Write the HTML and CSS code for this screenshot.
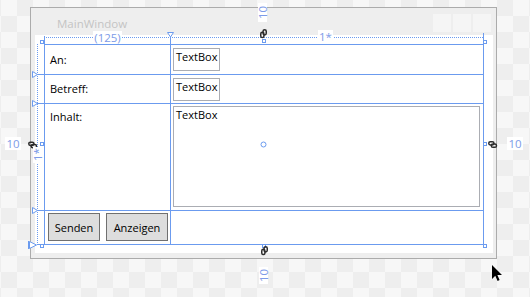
FILE: index.html
```html
<!DOCTYPE html>
<html>
<head>
<meta charset="utf-8">
<link rel="stylesheet" href="styles.css">
</head>
<body>
<div class="stage">
  <div class="window">
    <div class="titlebar">
      <span class="title">MainWindow</span>
      <div class="caps"><span></span><span></span><span></span></div>
    </div>
    <div class="client">
      <div class="grid">
        <div class="cell c1 rb"><span class="lbl l1">An:</span></div>
        <div class="cell rb"><span class="tb">TextBox</span></div>
        <div class="cell c1 rb"><span class="lbl l2">Betreff:</span></div>
        <div class="cell rb"><span class="tb">TextBox</span></div>
        <div class="cell c1 rb"><span class="lbl l3">Inhalt:</span></div>
        <div class="cell rb"><span class="tb big">TextBox</span></div>
        <div class="cell c1">
          <div class="btns">
            <div class="btn w52">Senden</div>
            <div class="btn w62">Anzeigen</div>
          </div>
        </div>
        <div class="cell"></div>
      </div>
    </div>
  </div>

  <svg class="overlay" viewBox="0 0 530 297" xmlns="http://www.w3.org/2000/svg">
    <defs>
      <g id="chain" fill="none" stroke="#2b2b2b" stroke-width="1.5">
        <rect x="0.75" y="0.75" width="5.2" height="3.2" rx="1.6"/>
        <rect x="3.3" y="3.05" width="5.2" height="3.2" rx="1.6"/>
      </g>
    </defs>
    <g stroke="#6b9bef" stroke-width="1" fill="none">
      <line x1="44" y1="37.5" x2="483" y2="37.5" stroke-dasharray="1 1"/>
      <line x1="37.5" y1="44" x2="37.5" y2="245" stroke-dasharray="1 1"/>
      <line x1="44.5" y1="36" x2="44.5" y2="44"/>
      <line x1="170.5" y1="37" x2="170.5" y2="44"/>
      <line x1="483.5" y1="33" x2="483.5" y2="44"/>
      <line x1="37" y1="74.5" x2="44" y2="74.5"/>
      <line x1="37" y1="103.5" x2="44" y2="103.5"/>
      <line x1="37" y1="210.5" x2="44" y2="210.5"/>
      <line x1="37" y1="244.5" x2="44" y2="244.5"/>
      <line x1="28.5" y1="241" x2="28.5" y2="249"/>
    </g>
    <g stroke="#6b9bef" stroke-width="1" fill="#fff">
      <polygon points="167.5,32.5 173.5,32.5 170.5,37"/>
      <polygon points="32.5,71.5 37.5,74.5 32.5,77.5"/>
      <polygon points="32.5,100.5 37.5,103.5 32.5,106.5"/>
      <polygon points="32.5,207.5 37.5,210.5 32.5,213.5"/>
      <polygon points="29.5,241.5 36.5,245 29.5,248.5"/>
      <rect x="40.5" y="40.5" width="3" height="3"/>
      <rect x="483.5" y="40.5" width="3" height="3"/>
      <rect x="40.5" y="244.5" width="3" height="3"/>
      <rect x="483.5" y="244.5" width="3" height="3"/>
      <rect x="40.5" y="142.5" width="3" height="3"/>
      <rect x="483.5" y="142.5" width="3" height="3"/>
      <rect x="262.5" y="39.5" width="3" height="3"/>
      <rect x="262.5" y="244.5" width="3" height="3"/>
      <circle cx="263.5" cy="144.5" r="2.5"/>
    </g>
    <use href="#chain" x="28" y="141.5"/>
    <use href="#chain" x="488" y="141"/>
    <use href="#chain" transform="translate(267,29) rotate(90)"/>
    <use href="#chain" transform="translate(268,246) rotate(90)"/>
    <path d="M492 265 V279 L495.3 275.8 L497.6 281 L499.6 280.1 L497.4 275 H502 Z" fill="#000"/>
  </svg>

  <span class="dim d125">(125)</span>
  <span class="dim d1s">1*</span>
  <span class="dim dl10">10</span>
  <span class="dim dr10">10</span>
  <span class="dim vert dt10">10</span>
  <span class="dim vert db10">10</span>
  <span class="dim vert dl1s">1*</span>
</div>
</body>
</html>
```

FILE: styles.css
```css
html, body {
  margin: 0;
  padding: 0;
}
body {
  width: 530px;
  height: 297px;
  overflow: hidden;
  font-family: "Open Sans", "Noto Sans", sans-serif;
  font-size: 11px;
  color: #000;
}
.stage {
  position: relative;
  width: 530px;
  height: 297px;
  background-color: #f7f7f7;
  background-image: conic-gradient(#eeeeee 25%, transparent 0 50%, #eeeeee 0 75%, transparent 0);
  background-size: 32px 32px;
  background-position: 1px 0;
}
.window {
  position: absolute;
  left: 30px;
  top: 7px;
  width: 467px;
  height: 252px;
  box-sizing: border-box;
  border: 1px solid #ababab;
  background: #eeeeee;
  display: flex;
  flex-direction: column;
}
.titlebar {
  height: 27px;
  flex: none;
  display: flex;
  align-items: flex-start;
}
.title {
  color: #c4c4c4;
  margin: 10px 0 0 26px;
  line-height: 12px;
  font-size: 11.5px;
}
.caps {
  margin: 6px 5px 0 auto;
  display: flex;
  gap: 2px;
}
.caps span {
  width: 18px;
  height: 18px;
  background: #f5f5f5;
}
.client {
  background: #fff;
  margin: 0 3px 5px 4px;
  height: 218px;
  padding: 9px 0 0 9px;
  box-sizing: border-box;
}
.grid {
  width: 440px;
  height: 201px;
  box-sizing: border-box;
  border: 1px solid #6b9bef;
  display: grid;
  grid-template-columns: 126px 312px;
  grid-template-rows: 30px 29px 107px 33px;
}
.cell {
  box-sizing: border-box;
  min-width: 0;
}
.c1 {
  border-right: 1px solid #6b9bef;
}
.rb {
  border-bottom: 1px solid #6b9bef;
}
.lbl {
  display: block;
  padding: 6px 5px 0;
  line-height: 16px;
}
.l1 { padding-top: 7px; }
.l2 { padding-top: 6px; }
.l3 { padding-top: 5px; }
.tb {
  display: inline-block;
  vertical-align: top;
  border: 1px solid #abadb3;
  height: 23px;
  box-sizing: border-box;
  padding: 0 2px;
  line-height: 16px;
  margin: 3px 0 0 2px;
  background: #fff;
}
.tb.big {
  display: block;
  width: 307px;
  height: 101px;
  margin: 2px 0 0 2px;
}
.btns {
  display: flex;
  gap: 6px;
  padding: 2px 0 0 3px;
}
.btn {
  height: 28px;
  box-sizing: border-box;
  border: 1px solid #707070;
  background: #dddddd;
  display: flex;
  align-items: center;
  justify-content: center;
}
.w52 { width: 52px; }
.w62 { width: 62px; }

.overlay {
  position: absolute;
  left: 0;
  top: 0;
  width: 530px;
  height: 297px;
  pointer-events: none;
}
.dim {
  position: absolute;
  background: #fff;
  color: #7d9be8;
  font-size: 11.5px;
  line-height: 13px;
  text-align: center;
  white-space: nowrap;
}
.d125 { left: 93px; top: 31px; width: 29px; height: 13px; }
.d1s { left: 318px; top: 30px; width: 15px; height: 13px; }
.dl10 { left: 5px; top: 137px; width: 16px; height: 13px; }
.dr10 { left: 507px; top: 137px; width: 16px; height: 13px; }
.vert {
  writing-mode: vertical-rl;
  transform: rotate(180deg);
  line-height: 9px;
  width: 9px;
}
.dt10 { left: 258px; top: 3px; height: 19px; }
.db10 { left: 259px; top: 267px; height: 17px; }
.dl1s { left: 33px; top: 147px; height: 16px; }
```
